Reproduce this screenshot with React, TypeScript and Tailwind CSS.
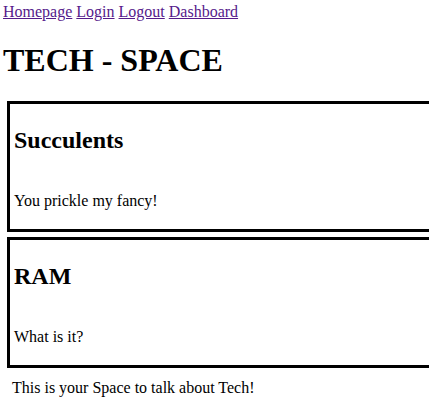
export default function App() {
  const posts = [
    { title: "Succulents", body: "You prickle my fancy!" },
    { title: "RAM", body: "What is it?" },
  ];

  return (
    <div className="min-h-screen overflow-hidden bg-white font-['Liberation_Serif',serif] text-black">
      <nav className="pl-[3px] pt-[3px] text-[16px] leading-[18px]">
        <a href="#" className="text-[#551A8B] underline">Homepage</a>{" "}
        <a href="#" className="text-[#551A8B] underline">Login</a>{" "}
        <a href="#" className="text-[#551A8B] underline">Logout</a>{" "}
        <a href="#" className="text-[#551A8B] underline">Dashboard</a>
      </nav>
      <h1 className="ml-[3px] mt-[21px] text-[32px] font-bold leading-[36px]">TECH - SPACE</h1>
      <div className="mt-[23px] flex flex-col gap-[5px]">
        {posts.map((p) => (
          <div key={p.title} className="ml-[7px] flex w-[460px] flex-col border-[3px] border-black px-[4px] py-[3px]">
            <h2 className="mb-[22px] mt-[20px] text-[24px] font-bold leading-[27px]">{p.title}</h2>
            <p className="my-[16px] text-[16px] leading-[18px]">{p.body}</p>
          </div>
        ))}
      </div>
      <p className="ml-[12px] mt-[11px] text-[16px] leading-[18px]">This is your Space to talk about Tech!</p>
    </div>
  );
}
